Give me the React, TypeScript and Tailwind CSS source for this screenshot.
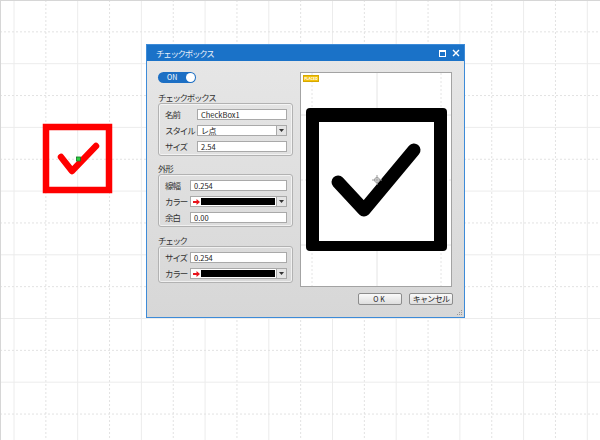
import React from "react";

const F = "font-[family-name:'Noto_Sans_CJK_JP','Noto_Sans',sans-serif]";

function Grid() {
  const vs: React.ReactNode[] = [];
  const step = 31.85;
  for (let k = -1; k < 20; k++) {
    const x = 14 + step * k;
    const solid = k % 2 === 0;
    vs.push(
      <line key={"v" + k} x1={x} y1={0} x2={x} y2={440} stroke={solid ? "#ececec" : "#e2e2e2"} strokeWidth={1} strokeDasharray={solid ? undefined : "2 2"} />
    );
  }
  for (let k = 0; k < 15; k++) {
    const y = step * k;
    const solid = k % 2 === 0;
    vs.push(
      <line key={"h" + k} x1={0} y1={y} x2={600} y2={y} stroke={solid ? "#ececec" : "#e2e2e2"} strokeWidth={1} strokeDasharray={solid ? undefined : "2 2"} />
    );
  }
  return (
    <svg className="absolute inset-0" width={600} height={440}>
      {vs}
    </svg>
  );
}

function DropBtn() {
  return (
    <div className="w-[10px] h-full border-l border-[#a9a9a9] bg-[#e4e4e4] flex items-center justify-center">
      <svg width="5" height="3" viewBox="0 0 5 3">
        <path d="M0 0 L5 0 L2.5 3 Z" fill="#333" />
      </svg>
    </div>
  );
}

function TextField({ value }: { value: string }) {
  return (
    <div className="flex-1 h-[11px] border border-[#a9a9a9] bg-white text-[7.5px] leading-[9px] pl-[3px] text-[#222] flex items-center">
      {value}
    </div>
  );
}

function SelectField({ value }: { value: string }) {
  return (
    <div className="flex-1 h-[11px] border border-[#a9a9a9] bg-white flex items-stretch">
      <div className="flex-1 text-[8px] tracking-[-0.6px] leading-[9px] pl-[3px] text-[#222] flex items-center">{value}</div>
      <DropBtn />
    </div>
  );
}

function ColorField() {
  return (
    <div className="flex-1 h-[11px] border border-[#a9a9a9] bg-white flex items-stretch">
      <div className="w-[10px] flex items-center justify-center">
        <svg width="7" height="6" viewBox="0 0 7 6">
          <path d="M0 2 H3.5 V0 L7 3 L3.5 6 V4 H0 Z" fill="#e8141c" />
        </svg>
      </div>
      <div className="flex-1 my-[1px] mr-[1px] bg-black" />
      <DropBtn />
    </div>
  );
}

function Row({ label, w, children }: { label: string; w: string; children: React.ReactNode }) {
  return (
    <div className="flex items-center h-[11px]">
      <div className={`${w} text-[8.5px] tracking-[-1.1px] leading-[11px] text-[#333] whitespace-nowrap`}>{label}</div>
      {children}
    </div>
  );
}

function Group({ children }: { children: React.ReactNode }) {
  return (
    <div className="border border-[#b2b2b2] rounded-[3px] pt-[5px] pb-[3px] pl-[6px] pr-[5px] flex flex-col gap-[5px] shadow-[inset_0_0_0_1px_rgba(255,255,255,0.6)]">
      {children}
    </div>
  );
}

function SectionLabel({ text, mt }: { text: string; mt: string }) {
  return <div className={`${mt} h-[12px] text-[8.5px] tracking-[-1.3px] leading-[12px] text-[#333]`}>{text}</div>;
}

function Preview() {
  const ox = 301;
  const oy = 73;
  return (
    <div className="relative w-[152px] h-[215px] border border-[#a3a3a3] bg-white">
      <svg className="absolute inset-0" width={150} height={213}>
        <line x1={76} y1={0} x2={76} y2={213} stroke="#e4e4e4" />
        <line x1={11} y1={0} x2={11} y2={213} stroke="#e4e4e4" strokeDasharray="2 2" />
        <line x1={140} y1={0} x2={140} y2={213} stroke="#e4e4e4" strokeDasharray="2 2" />
        <line x1={0} y1={42} x2={150} y2={42} stroke="#e4e4e4" />
        <line x1={0} y1={107} x2={150} y2={107} stroke="#e4e4e4" strokeDasharray="2 2" />
        <line x1={0} y1={172} x2={150} y2={172} stroke="#e4e4e4" />
        <rect x={306 - ox} y={108 - oy} width={141} height={143} rx={4} fill="#000" />
        <rect x={319 - ox} y={122 - oy} width={115} height={119} fill="#fff" />
        <path d={`M${338 - ox} ${182 - oy} L${364 - ox} ${210 - oy} L${414 - ox} ${150 - oy}`} fill="none" stroke="#000" strokeWidth={13} strokeLinecap="round" strokeLinejoin="round" />
        <g stroke="#9a9a9a" strokeWidth={1} fill="none">
          <circle cx={377 - ox} cy={180 - oy} r={2.5} />
          <line x1={377 - ox - 5} y1={180 - oy} x2={377 - ox + 5} y2={180 - oy} />
          <line x1={377 - ox} y1={180 - oy - 5} x2={377 - ox} y2={180 - oy + 5} />
        </g>
      </svg>
      <div className="absolute left-[2px] top-[2px] w-[16px] h-[7px] bg-[#f4c20d] border border-[#d6a800] text-[3.5px] leading-[5px] text-white text-center font-bold">
        PLACED
      </div>
    </div>
  );
}

export default function App() {
  return (
    <div className={`relative w-[600px] h-[440px] bg-white overflow-hidden ${F}`}>
      <Grid />
      <div className="absolute left-0 top-0 w-full h-[1px] bg-[#d6d6d6]" />
      <div className="absolute left-0 top-0 h-full w-[1px] bg-[#d6d6d6]" />

      <svg className="absolute left-0 top-0" width={140} height={220}>
        <rect x={46} y={127} width={63} height={63} fill="none" stroke="#ff0000" strokeWidth={6.5} />
        <path d="M61 157 L72 171 L96 146" fill="none" stroke="#ff0000" strokeWidth={6.5} strokeLinecap="round" strokeLinejoin="round" />
        <rect x={76.5} y={157} width={4} height={4} fill="#2ecc40" stroke="#0a7a1e" strokeWidth={0.8} />
      </svg>

      <div className="absolute left-[146px] top-[44px] w-[319px] h-[274px] border border-[#3d8bd8] flex flex-col">
        <div className="h-[16px] bg-[#1a72c8] flex items-center justify-between pl-[9px] pr-[4px]">
          <span className="text-[8.5px] tracking-[-1.3px] leading-[16px] text-[#e8f0fa]">チェックボックス</span>
          <div className="flex items-center gap-[6px]">
            <svg width="7" height="7" viewBox="0 0 7 7">
              <rect x="0.5" y="0.5" width="6" height="6" fill="none" stroke="#fff" strokeWidth="1" />
              <rect x="0" y="0" width="7" height="2" fill="#fff" />
            </svg>
            <svg width="8" height="8" viewBox="0 0 8 8">
              <path d="M1 1 L7 7 M7 1 L1 7" stroke="#fff" strokeWidth="1.4" />
            </svg>
          </div>
        </div>
        <div className="relative flex-1 bg-linear-to-b from-[#e6e6e6] to-[#d7d7d7] pt-[11px] flex flex-col">
          <div className="flex gap-[7px] pl-[11px] pr-[11px]">
            <div className="w-[135px] flex flex-col">
              <div className="relative w-[38px] h-[11px] rounded-full bg-[#1c6fc4] flex items-center">
                <span className="ml-[9px] text-[7px] leading-[11px] text-white">ON</span>
                <div className="absolute right-[1px] top-[1px] w-[9px] h-[9px] rounded-full bg-white" />
              </div>
              <SectionLabel text="チェックボックス" mt="mt-[8px]" />
              <Group>
                <Row label="名前" w="w-[32px]">
                  <TextField value="CheckBox1" />
                </Row>
                <Row label="スタイル" w="w-[32px]">
                  <SelectField value="レ点" />
                </Row>
                <Row label="サイズ" w="w-[32px]">
                  <TextField value="2.54" />
                </Row>
              </Group>
              <SectionLabel text="外形" mt="mt-[6px]" />
              <Group>
                <Row label="線幅" w="w-[25px]">
                  <TextField value="0.254" />
                </Row>
                <Row label="カラー" w="w-[25px]">
                  <ColorField />
                </Row>
                <Row label="余白" w="w-[25px]">
                  <TextField value="0.00" />
                </Row>
              </Group>
              <SectionLabel text="チェック" mt="mt-[7px]" />
              <Group>
                <Row label="サイズ" w="w-[25px]">
                  <TextField value="0.254" />
                </Row>
                <Row label="カラー" w="w-[25px]">
                  <ColorField />
                </Row>
              </Group>
            </div>
            <Preview />
          </div>
          <div className="mt-[6px] flex justify-end gap-[7px] pr-[11px]">
            <div className="w-[44px] h-[12px] border border-[#8c8c8c] rounded-[2px] bg-linear-to-b from-[#fafafa] to-[#dedede] text-[7px] leading-[10px] text-[#222] text-center tracking-[2px]">
              OK
            </div>
            <div className="w-[44px] h-[12px] border border-[#8c8c8c] rounded-[2px] bg-linear-to-b from-[#fafafa] to-[#dedede] text-[8px] tracking-[-0.7px] leading-[10px] text-[#222] text-center">
              キャンセル
            </div>
          </div>
          <svg className="absolute right-[1px] bottom-[1px]" width="6" height="6" viewBox="0 0 6 6">
            <rect x="4" y="0" width="1" height="1" fill="#999" />
            <rect x="2" y="2" width="1" height="1" fill="#999" />
            <rect x="4" y="2" width="1" height="1" fill="#999" />
            <rect x="0" y="4" width="1" height="1" fill="#999" />
            <rect x="2" y="4" width="1" height="1" fill="#999" />
            <rect x="4" y="4" width="1" height="1" fill="#999" />
          </svg>
        </div>
      </div>
    </div>
  );
}
